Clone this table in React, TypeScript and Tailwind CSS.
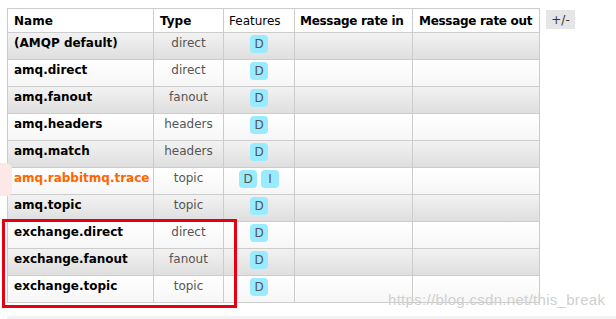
import React from "react";

type Exchange = {
  name: string;
  type: string;
  features: string[];
  internal?: boolean;
};

const EXCHANGES: Exchange[] = [
  { name: "(AMQP default)", type: "direct", features: ["D"] },
  { name: "amq.direct", type: "direct", features: ["D"] },
  { name: "amq.fanout", type: "fanout", features: ["D"] },
  { name: "amq.headers", type: "headers", features: ["D"] },
  { name: "amq.match", type: "headers", features: ["D"] },
  { name: "amq.rabbitmq.trace", type: "topic", features: ["D", "I"], internal: true },
  { name: "amq.topic", type: "topic", features: ["D"] },
  { name: "exchange.direct", type: "direct", features: ["D"] },
  { name: "exchange.fanout", type: "fanout", features: ["D"] },
  { name: "exchange.topic", type: "topic", features: ["D"] },
];

function Badge({ label }: { label: string }) {
  return (
    <span className="inline-flex h-[18px] w-[18px] items-center justify-center rounded-[4px] bg-[#99ebff] text-[12px] leading-none text-[#555]">
      {label}
    </span>
  );
}

export default function App() {
  return (
    <div className="relative h-[319px] w-[616px] overflow-hidden bg-white font-['DejaVu_Sans',Verdana,sans-serif]">
      <div className="flex items-start gap-[6px] pl-[7px] pt-[8px]">
        <table className="w-[532px] table-fixed border-collapse whitespace-nowrap text-[12px] leading-[16px]">
          <colgroup>
            <col className="w-[146px]" />
            <col className="w-[70px]" />
            <col className="w-[71px]" />
            <col className="w-[118px]" />
            <col className="w-[127px]" />
          </colgroup>
          <thead>
            <tr className="bg-white text-left">
              <th className="h-[24px] border border-[#ccc] px-[6px] py-0 font-bold text-black">Name</th>
              <th className="h-[24px] border border-[#ccc] px-[6px] py-0 font-bold text-black">Type</th>
              <th className="h-[24px] border border-[#ccc] px-[5px] py-0 font-normal text-black">Features</th>
              <th className="h-[24px] border border-[#ccc] px-[5px] py-0 font-bold tracking-[-0.3px] text-black">Message rate in</th>
              <th className="h-[24px] border border-[#ccc] px-[6px] py-0 font-bold tracking-[-0.3px] text-black">Message rate out</th>
            </tr>
          </thead>
          <tbody>
            {EXCHANGES.map((ex, i) => (
              <tr
                key={ex.name}
                className={
                  i % 2 === 0
                    ? "bg-gradient-to-b from-[#f2f2f2] to-[#dedede]"
                    : "bg-gradient-to-b from-white to-[#f6f6f6]"
                }
              >
                <td
                  className={
                    ex.internal
                      ? "h-[27px] border border-[#ccc] px-[6px] pt-[2px] pb-0 align-top font-bold text-[#ff6600]"
                      : "h-[27px] border border-[#ccc] px-[6px] pt-[2px] pb-0 align-top font-bold text-black"
                  }
                >
                  {ex.name}
                </td>
                <td className="h-[27px] border border-[#ccc] px-0 pt-[2px] pb-0 text-center align-top text-[#555]">
                  {ex.type}
                </td>
                <td className="h-[27px] border border-[#ccc] px-0 pt-[2px] pb-0 text-center align-top">
                  <div className="flex justify-center gap-[4px]">
                    {ex.features.map((f) => (
                      <Badge key={f} label={f} />
                    ))}
                  </div>
                </td>
                <td className="h-[27px] border border-[#ccc] p-0" />
                <td className="h-[27px] border border-[#ccc] p-0" />
              </tr>
            ))}
          </tbody>
        </table>
        <span className="mt-[2px] flex h-[19px] w-[29px] items-center justify-center bg-[#e6e6e6] text-[12px] text-[#333]">
          +/-
        </span>
      </div>

      <div className="ml-[7px] mt-[13px] h-[10px] bg-[#f3f3f3]" />

      {/* red highlight box */}
      <div className="absolute left-[2px] top-[219px] h-[89px] w-[235px] border-[3px] border-[#e60012]" />

      {/* faint watermark logo */}
      <div className="absolute left-[-6px] top-[163px] h-[33px] w-[18px] rounded-[6px] bg-[#fde8e8]" />

      {/* csdn watermark */}
      <div className="absolute left-[388px] top-[290px] font-['Liberation_Sans',Arial,sans-serif] text-[15px] leading-[20px] tracking-[0.3px] text-[#d0d0d0]">
        https://blog.csdn.net/this_break
      </div>
    </div>
  );
}
